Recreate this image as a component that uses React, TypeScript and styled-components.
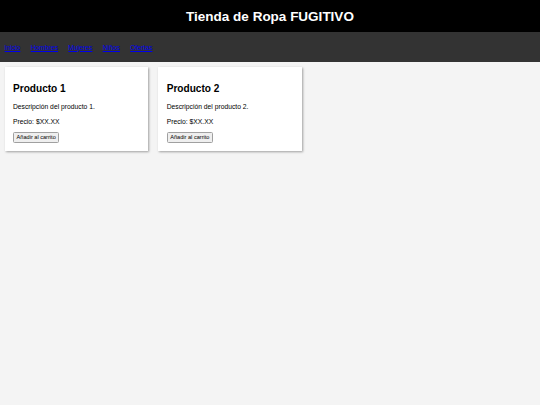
import React from "react";
import styled, { createGlobalStyle } from "styled-components";

type Product = {
  id: number;
  name: string;
  description: string;
  price: string;
};

const products: Product[] = [
  { id: 1, name: "Producto 1", description: "Descripción del producto 1.", price: "$XX.XX" },
  { id: 2, name: "Producto 2", description: "Descripción del producto 2.", price: "$XX.XX" },
];

const links = ["Inicio", "Hombres", "Mujeres", "Niños", "Ofertas"];

const App = () => {
  return (
    <>
      <GlobalStyle />
      <Header>
        <Title>Tienda de Ropa FUGITIVO</Title>
      </Header>
      <Nav>
        {links.map((link) => (
          <NavLink key={link} href="#">
            {link}
          </NavLink>
        ))}
      </Nav>
      <Main>
        {products.map((product) => (
          <Card key={product.id}>
            <CardTitle>{product.name}</CardTitle>
            <CardText>{product.description}</CardText>
            <CardText>Precio: {product.price}</CardText>
            <CartButton>Añadir al carrito</CartButton>
          </Card>
        ))}
      </Main>
    </>
  );
};

const GlobalStyle = createGlobalStyle`
  html, body {
    margin: 0;
    padding: 0;
    background: #f4f4f4;
    font-family: "Liberation Sans", Arial, sans-serif;
  }
`;

const Header = styled.header`
  display: flex;
  align-items: center;
  justify-content: center;
  height: 32px;
  background: #000;
  color: #fff;
`;

const Title = styled.h1`
  margin: 0;
  font-size: 13.5px;
  font-weight: bold;
`;

const Nav = styled.nav`
  display: flex;
  align-items: center;
  gap: 10.3px;
  height: 30px;
  padding-left: 4.6px;
  background: #333;
`;

const NavLink = styled.a`
  font-size: 6.75px;
  color: #0000ee;
  text-decoration: underline;
`;

const Main = styled.main`
  display: flex;
  align-items: flex-start;
  gap: 10.3px;
  padding: 4.6px 4.6px;
`;

const Card = styled.div`
  width: 126.6px;
  padding: 8.4px;
  background: #fff;
  box-shadow: 1px 1px 2.2px rgba(0, 0, 0, 0.35);
`;

const CardTitle = styled.h2`
  margin: 8.4px 0;
  font-size: 10.1px;
  line-height: 11.6px;
  font-weight: bold;
  color: #000;
`;

const CardText = styled.p`
  margin: 6.75px 0;
  font-size: 6.75px;
  line-height: 7.8px;
  color: #000;
`;

const CartButton = styled.button`
  display: block;
  margin: 0;
  padding: 1px 2.6px;
  font-family: "Liberation Sans", Arial, sans-serif;
  font-size: 5.6px;
  line-height: 6.6px;
  color: #000;
  background: #efefef;
  border: 1px solid #a0a0a0;
  border-radius: 1.5px;
`;

export default App;
